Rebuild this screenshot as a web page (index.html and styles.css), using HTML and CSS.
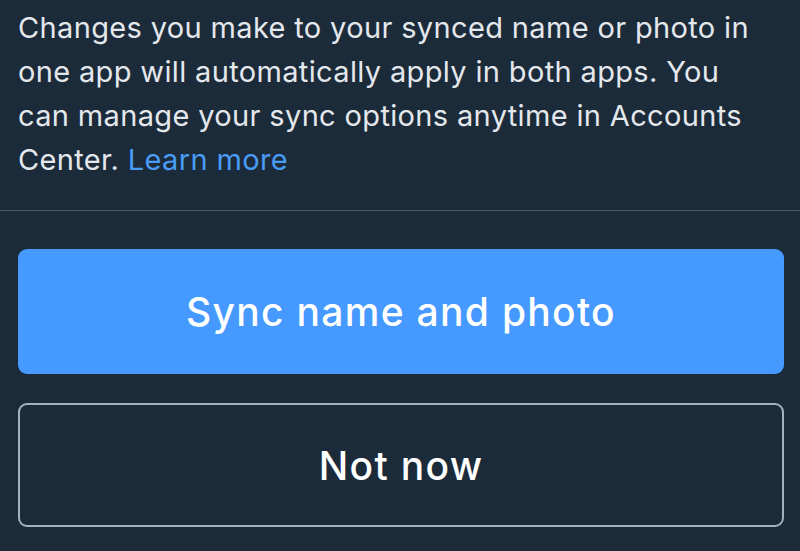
FILE: index.html
```html
<!DOCTYPE html>
<html lang="en">
<head>
<meta charset="utf-8">
<title>Sync name and photo</title>
<link rel="stylesheet" href="styles.css">
</head>
<body>
  <div class="sheet">
    <p class="desc">Changes you make to your synced name or photo in one app will automatically apply in both apps. You can manage your sync options anytime in Accounts Center. <a class="link" href="#">Learn more</a></p>
    <hr class="divider">
    <div class="actions">
      <button class="btn btn-primary">Sync name and photo</button>
      <button class="btn btn-secondary">Not now</button>
    </div>
  </div>
</body>
</html>
```

FILE: styles.css
```css
html, body {
  margin: 0;
  padding: 0;
  background: #1c2b3a;
  height: 100%;
  overflow: hidden;
}
.sheet {
  font-family: Inter, "Open Sans", sans-serif;
  color: #e4e8ec;
}
.desc {
  margin: 0;
  padding: 6px 40px 0 18px;
  font-size: 29px;
  line-height: 44px;
  letter-spacing: 0.35px;
}
.link {
  color: #4a9cf5;
  text-decoration: none;
}
.divider {
  margin: 28px 0 0 0;
  border: 0;
  height: 1px;
  background: #4b5a68;
}
.actions {
  display: flex;
  flex-direction: column;
  gap: 29px;
  padding: 38px 16px 0 18px;
}
.btn {
  font-family: Inter, "Open Sans", sans-serif;
  font-size: 39px;
  font-weight: 500;
  letter-spacing: 1.3px;
  border-radius: 9px;
  cursor: pointer;
}
.btn-primary {
  height: 125px;
  background: #4599ff;
  color: #ffffff;
  border: 0;
}
.btn-secondary {
  height: 124px;
  background: transparent;
  color: #ffffff;
  border: 2px solid #a3b1bf;
}
```
